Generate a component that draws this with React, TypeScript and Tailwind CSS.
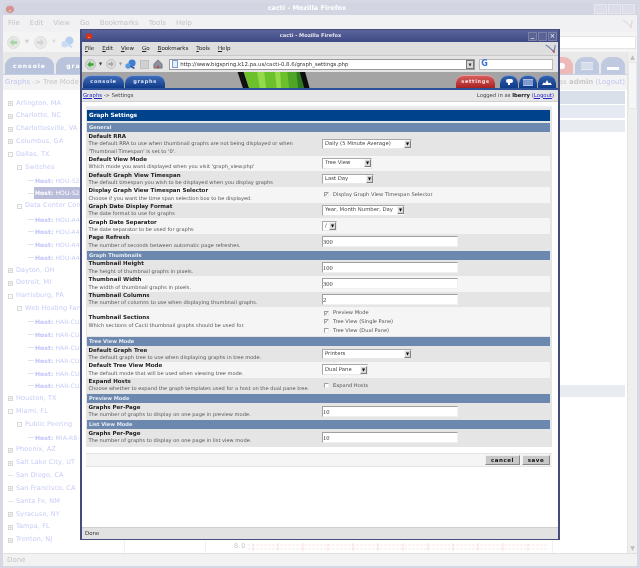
const font = "font-['DejaVu_Sans',sans-serif]"

const tree: [number, string, string?][] = [
  [0, 'Arlington, MA', '+'],
  [0, 'Charlotte, NC', '+'],
  [0, 'Charlottesville, VA', '+'],
  [0, 'Columbus, GA', '+'],
  [0, 'Dallas, TX', '-'],
  [1, 'Switches', '-'],
  [2, 'HOU-S2-01'],
  [3, 'HOU-S2-02'],
  [1, 'Data Center Core', '-'],
  [2, 'HOU-A4-01'],
  [2, 'HOU-A4-02'],
  [2, 'HOU-A4-03'],
  [2, 'HOU-A4-04'],
  [0, 'Dayton, OH', '+'],
  [0, 'Detroit, MI', '+'],
  [0, 'Harrisburg, PA', '-'],
  [1, 'Web Hosting Farm', '-'],
  [2, 'HAR-CU-01'],
  [2, 'HAR-CU-02'],
  [2, 'HAR-CU-03'],
  [2, 'HAR-CU-04'],
  [2, 'HAR-CU-05'],
  [2, 'HAR-CU-06'],
  [0, 'Houston, TX', '+'],
  [0, 'Miami, FL', '-'],
  [1, 'Public Peering', '-'],
  [2, 'MIA-R8-01'],
  [0, 'Phoenix, AZ', '+'],
  [0, 'Salt Lake City, UT', '+'],
  [0, 'San Diego, CA'],
  [0, 'San Francisco, CA', '+'],
  [0, 'Santa Fe, NM'],
  [0, 'Syracuse, NY', '+'],
  [0, 'Tampa, FL', '+'],
  [0, 'Trenton, NJ', '+'],
]

function Firefoxish({ className }: { className: string }) {
  return (
    <svg viewBox="0 0 12 12" className={className}>
      <path d="M1 7c0-3 2-5 3-5l1 1 1-2 1 2 1-1c2 1 3 3 3 5 0 2-2 4-5 4S1 9 1 7z" fill="#d8301e" />
      <path d="M4 8c1-1 3-1 4 0-1 1.500-3 1.500-4 0z" fill="#f7b32b" />
    </svg>
  )
}

function Tick({ faded }: { faded?: boolean }) {
  return (
    <svg viewBox="0 0 16 12" className="w-[13px] h-[11px]">
      <path d="M2 2c4 1 8 6 10 8 1-2 1-5 2-8" fill="none" stroke={faded ? '#d8d8e8' : '#6f7ca8'} strokeWidth="1.400" />
      <path d="M11 9l2 2" stroke={faded ? '#f4c8c8' : '#c83030'} strokeWidth="1.500" />
    </svg>
  )
}

function Arrow({ color, dir, size }: { color: string; dir: 'l' | 'r'; size: string }) {
  return (
    <svg viewBox="0 0 14 14" className={size}>
      <circle cx="7" cy="7" r="6.500" fill={color === 'green' ? '#d0d8d0' : '#dcdcdc'} stroke="#a8a8a8" strokeWidth="0.700" />
      <path
        d={dir === 'l' ? 'M3 7l4-4v2.500h4v3H7V11z' : 'M11 7L7 3v2.500H3v3h4V11z'}
        fill={color === 'green' ? '#3fa535' : '#a8a8a8'}
      />
    </svg>
  )
}

function Globe({ size, faded }: { size: string; faded?: boolean }) {
  return (
    <svg viewBox="0 0 14 14" className={size}>
      <circle cx="9" cy="5" r="4.500" fill={faded ? '#b8d0f0' : '#3f7fd0'} />
      <circle cx="4" cy="9" r="3.500" fill={faded ? '#c8dcf4' : '#5b9ae0'} />
      <path d="M7 9l5 3" stroke={faded ? '#c8dcf4' : '#24508c'} strokeWidth="2" />
    </svg>
  )
}

function BackgroundWindow() {
  return (
    <div className="w-[640px] h-[568px] flex flex-col bg-white border-x-[3px] border-t-[3px] border-b-2 border-[#d6d8e4]">
      <div className="h-[12px] shrink-0 bg-[#d3d5e3] flex items-center relative">
        <Firefoxish className="w-[10px] h-[10px] ml-[2px] opacity-40" />
        <span className="flex-1 text-center text-[6.500px] font-bold text-white pl-[5px]">cacti - Mozilla Firefox</span>
        <span className="flex gap-[1px] mr-[2px]">
          <span className="w-[13px] h-[10px] bg-[#dcdde8] border border-[#e6e7ef]" />
          <span className="w-[13px] h-[10px] bg-[#dcdde8] border border-[#e6e7ef]" />
          <span className="w-[13px] h-[10px] bg-[#dcdde8] border border-[#e6e7ef]" />
        </span>
      </div>
      <div className="h-[17px] shrink-0 bg-[#f1f1f3] flex items-center gap-[10px] pl-[5px] text-[7px] text-[#c4c4c4] relative">
        <span>File</span>
        <span>Edit</span>
        <span>View</span>
        <span>Go</span>
        <span>Bookmarks</span>
        <span>Tools</span>
        <span>Help</span>
        <span className="ml-auto mr-[3px]">
          <Tick faded />
        </span>
      </div>
      <div className="h-[20px] shrink-0 bg-[#f4f4f4] flex items-center pl-[4px] gap-[5px] pr-[1px]">
        <Arrow color="green" dir="l" size="w-[13px] h-[13px] opacity-40" />
        <span className="w-[4px] text-[5px] text-[#ccc]">▼</span>
        <Arrow color="gray" dir="r" size="w-[13px] h-[13px] opacity-40" />
        <span className="w-[4px] text-[5px] text-[#ddd]">▼</span>
        <Globe size="w-[13px] h-[13px]" faded />
        <span className="ml-auto w-[100px] h-[13px] bg-white border border-[#e4e4e4]" />
      </div>
      <div className="flex-1 flex min-h-0">
        <div className="flex-1 flex flex-col min-w-0">
          <div className="h-[23px] shrink-0 bg-[#e9e9e9] border-b border-[#c6cfe4] flex items-end pl-[2px]">
            <span className="w-[49px] h-[17px] rounded-t-[9px] bg-[#b9c4dc] text-white text-[6px] font-bold tracking-[1px] flex items-center justify-center">
              console
            </span>
            <span className="ml-[2px] w-[50px] h-[17px] rounded-t-[9px] bg-[#b9c4dc] text-white text-[6px] font-bold tracking-[1px] flex items-center justify-center">
              graphs
            </span>
            <span className="ml-auto w-[24px] h-[17px] rounded-t-[9px] bg-[#eeb9b9] flex items-center justify-center">
              <span className="w-[8px] h-[6px] rounded-full bg-white" />
            </span>
            <span className="ml-[2px] w-[24px] h-[17px] rounded-t-[9px] bg-[#bfc9e0] flex items-center justify-center">
              <span className="w-[12px] h-[8px] bg-[#d5dcea] border-y border-[#e6eaf2]" />
            </span>
            <span className="ml-[2px] mr-[2px] w-[24px] h-[17px] rounded-t-[9px] bg-[#bfc9e0] flex items-end justify-center pb-[4px]">
              <span className="w-[12px] h-[3px] bg-white" />
            </span>
          </div>
          <div className="h-[15px] shrink-0 bg-[#f3f3f3] flex items-center justify-between px-[2px] text-[7px] text-[#c8c8c8]">
            <span>
              <span className="text-[#c4c4f4]">Graphs</span> -&gt; Tree Mode
            </span>
            <span>
              Logged in as <b>admin</b> <span className="text-[#c4c4f4]">(Logout)</span>
            </span>
          </div>
          <div className="flex-1 flex min-h-0">
            <div className="w-[122px] shrink-0 border-r border-[#f0f0f0] pt-[7px] overflow-hidden">
              {tree.map(([level, name, toggle], i) => (
                <div key={i} className="h-[12.850px] flex items-center text-[6.500px] tracking-[0.100px] text-[#c8ccf8] whitespace-nowrap">
                  {level >= 2 ? (
                    <>
                      <span className="ml-[25px] w-[6px] border-t border-[#e4e4e4]" />
                      <span className={level === 3 ? 'text-[6px] bg-[#b8bcd8] text-white px-[1px] h-[12px] leading-[12px]' : 'text-[6px] px-[1px]'}>
                        <b className={level === 3 ? 'text-white' : 'text-[#c0c4f8]'}>Host:</b> {name}
                      </span>
                    </>
                  ) : (
                    <>
                      <span className={level === 1 ? 'w-[5px] h-[5px] ml-[14px] mr-[3px]' : 'w-[5px] h-[5px] ml-[5px] mr-[3px]'}>
                        {toggle ? (
                          <span className="w-[5px] h-[5px] border border-[#d8d8d8] text-[#c8c8c8] text-[5px] leading-[3px] flex items-center justify-center">
                            {toggle}
                          </span>
                        ) : (
                          <span className="block w-[5px] mt-[2px] border-t border-[#e4e4e4]" />
                        )}
                      </span>
                      <span>{name}</span>
                    </>
                  )}
                </div>
              ))}
            </div>
            <div className="flex-1 flex flex-col pr-[2px] pt-[1px] relative">
              <div className="h-[13px] bg-[#d9e0e9]" />
              <div className="h-[13px] mt-[1px] bg-[#e5e9f1]" />
              <div className="h-[12px] mt-[2px] bg-[#e8ecf1]" />
              <div className="h-[12px] mt-[253px] bg-[#e8ecf1]" />
              <div className="flex-1" />
              <div className="h-[12px] flex items-center border-x border-[#f0f0f0] ml-[80px] mr-[72px] pl-[28px] text-[6.500px] tracking-[0.500px] text-[#c4c4c4]">
                <span>8.0</span>
                <svg viewBox="0 0 300 10" className="ml-[2px] w-[300px] h-[10px]">
                  <path d="M0 3h300M0 7h300" stroke="#f6dede" strokeWidth="0.700" strokeDasharray="3 1" />
                  <path d="M5 1v8M30 1v8M55 1v8M80 1v8M105 1v8M130 1v8M155 1v8M180 1v8M205 1v8M230 1v8M255 1v8M280 1v8" stroke="#f4cccc" strokeWidth="0.600" />
                </svg>
              </div>
            </div>
          </div>
        </div>
        <div className="w-[10px] shrink-0 bg-[#efefef] border-l border-[#e4e4e4] flex flex-col">
          <span className="h-[10px] text-[6px] text-center text-[#bcbcbc]">▲</span>
          <span className="h-[47px] bg-[#f6f6f6] border border-[#e8e8e8]" />
          <span className="mt-auto h-[10px] text-[6px] text-center text-[#bcbcbc]">▼</span>
        </div>
      </div>
      <div className="h-[13px] shrink-0 bg-[#f2f2f2] border-t border-[#e0e0e0] pl-[4px] text-[7px] leading-[13px] text-[#c8c8c8]">Done</div>
    </div>
  )
}

function Tab({ label, wide }: { label: string; wide: string }) {
  return (
    <span className={`${wide} h-[13px] rounded-t-[8px] bg-gradient-to-b from-[#3f6cb8] to-[#0f3a88] text-[#dfe6f4] text-[5px] font-bold tracking-[0.700px] flex items-center justify-center border-t border-[#8aa4d4]`}>
      {label}
    </span>
  )
}

function IconTab({ wide, children }: { wide: string; children: React.ReactNode }) {
  return (
    <span className={`${wide} h-[13px] rounded-t-[8px] bg-gradient-to-b from-[#3160ac] to-[#0f3a88] flex items-center justify-center border-t border-[#7e9ace]`}>
      {children}
    </span>
  )
}

function Select({ text, wide }: { text: string; wide: string }) {
  return (
    <div className={`${wide} h-[10.500px] bg-white border border-[#a8a8a8] border-r-[#e8e8e8] border-b-[#e8e8e8] flex items-center justify-between pl-[2px] text-[5.300px] text-[#444] whitespace-nowrap`}>
      <span>{text}</span>
      <span className="w-[7px] h-[8px] bg-[#d8d8d8] border border-[#f4f4f4] border-r-[#808080] border-b-[#808080] text-[4px] leading-[6px] text-center text-black">▼</span>
    </div>
  )
}

function TextBox({ value }: { value: string }) {
  return (
    <div className="w-[136px] h-[11px] bg-white border border-[#a0a0a0] border-r-[#f0f0f0] border-b-[#f0f0f0] text-[6.500px] leading-[9px] text-[#444] font-['Liberation_Serif',serif]">
      {value}
    </div>
  )
}

function Check({ label, on }: { label: string; on?: boolean }) {
  return (
    <div className="flex items-center h-[8.700px] text-[5.150px] text-[#555]">
      <span className="w-[5px] h-[5px] ml-[2px] mr-[4px] bg-white border border-[#a0a0a0] border-r-[#eee] border-b-[#eee] text-[5px] leading-[3px] text-[#444] flex items-center justify-center">
        {on ? '✓' : ''}
      </span>
      {label}
    </div>
  )
}

function Row({ title, desc, alt, height, children }: { title: string; desc: React.ReactNode; alt?: boolean; height?: string; children: React.ReactNode }) {
  return (
    <div className={`${height ?? 'h-[15.700px]'} ${alt ? 'bg-[#f5f5f5]' : 'bg-[#e5e5e5]'} flex`}>
      <div className="w-[235px] shrink-0 pl-[1.500px] flex flex-col justify-center">
        <div className="text-[5.500px] leading-[7.500px] font-bold text-[#1c1c1c] whitespace-nowrap">{title}</div>
        <div className="text-[5.100px] leading-[7.500px] text-[#555] whitespace-nowrap">{desc}</div>
      </div>
      <div className="flex-1 flex flex-col justify-center">{children}</div>
    </div>
  )
}

function Section({ label, mt }: { label: string; mt: string }) {
  return (
    <div className={`${mt} h-[9.500px] bg-[#6d88ae] text-[#e8edf5] text-[5.100px] leading-[9.500px] font-bold pl-[2px]`}>{label}</div>
  )
}

function FrontWindow() {
  return (
    <div className="absolute left-[80px] top-[29px] w-[480px] h-[511px] flex flex-col bg-white border-x-2 border-y border-[#454e7a]">
      <div className="h-[12px] shrink-0 bg-gradient-to-b from-[#5b649a] to-[#3f4a86] flex items-center">
        <Firefoxish className="w-[8px] h-[8px] ml-[3px]" />
        <span className="flex-1 text-center text-[5.100px] font-bold text-[#e4e6f2]">cacti - Mozilla Firefox</span>
        <span className="flex gap-[1px] mr-[1px]">
          <span className="w-[9px] h-[9px] bg-[#5a6494] border border-[#7a82aa] text-[7px] leading-[5px] text-center text-white">_</span>
          <span className="w-[9px] h-[9px] bg-[#5a6494] border border-[#7a82aa]" />
          <span className="w-[9px] h-[9px] bg-[#5a6494] border border-[#7a82aa] text-[7px] leading-[7px] text-center text-white">×</span>
        </span>
      </div>
      <div className="h-[13px] shrink-0 bg-[#dedede] flex items-center pl-[3px] gap-[8px] text-[5.500px] text-[#222]">
        <span><u>F</u>ile</span>
        <span><u>E</u>dit</span>
        <span><u>V</u>iew</span>
        <span><u>G</u>o</span>
        <span><u>B</u>ookmarks</span>
        <span><u>T</u>ools</span>
        <span><u>H</u>elp</span>
        <span className="ml-auto mr-[1px]">
          <Tick />
        </span>
      </div>
      <div className="h-[17px] shrink-0 bg-[#e4e4e4] border-t border-[#c8c8c8] flex items-center pl-[3px] pr-[2px]">
        <Arrow color="green" dir="l" size="w-[11px] h-[11px]" />
        <span className="text-[4px] ml-[3px] mr-[4px] text-[#333]">▼</span>
        <Arrow color="gray" dir="r" size="w-[10px] h-[10px]" />
        <span className="text-[4px] ml-[3px] mr-[3px] text-[#999]">▼</span>
        <Globe size="w-[11px] h-[11px]" />
        <span className="w-[9px] h-[9px] ml-[4px] mr-[4px] bg-[#d0d0d0] border border-[#c0c0c0]" />
        <svg viewBox="0 0 12 12" className="w-[10px] h-[10px] shrink-0">
          <path d="M1 6l5-5 5 5v5H1z" fill="#8b8fa0" stroke="#555" strokeWidth="0.600" />
          <path d="M5 8h2v3H5z" fill="#c0462a" />
        </svg>
        <div className="ml-[6px] w-[306px] h-[11px] shrink-0 bg-white border border-[#9a9a9a] flex items-center text-[5.400px] text-[#333] pl-[2px] whitespace-nowrap">
          <span className="w-[6px] h-[8px] mr-[2px] bg-[#e8eefc] border border-[#7a9ad4]" />
          <span className="flex-1">http://www.bigspring.k12.pa.us/cacti-0.8.6/graph_settings.php</span>
          <span className="w-[8px] h-[9px] bg-[#d8d8d8] border border-[#777] text-[4px] leading-[7px] text-center">▼</span>
        </div>
        <div className="ml-[4px] w-[74px] h-[11px] shrink-0 bg-white border border-[#bbb] flex items-center pl-[1px]">
          <span className="text-[8px] leading-[8px] font-bold text-[#3a6fd8]">G</span>
        </div>
      </div>
      <div className="h-[18px] shrink-0 bg-[#a4a4a4] border-b-2 border-[#2e4f9a] flex items-end pl-[1px] pr-[2px] relative overflow-hidden">
        <Tab label="console" wide="w-[41px]" />
        <span className="ml-[1px]">
          <Tab label="graphs" wide="w-[40px]" />
        </span>
        <svg viewBox="0 0 82 18" className="absolute left-[151px] top-0 w-[82px] h-[16px]">
          <path d="M0 0h7l6 18H6z" fill="#111" />
          <path d="M7 0h67l3 18H13z" fill="#6cc02c" />
          <path d="M22 0h8l2 18h-7zM42 0h6l1 18h-5z" fill="#93da4c" />
          <path d="M56 0h10l2 18H58z" fill="#4ea526" />
          <path d="M66 0h8l3 18H68z" fill="#2f7a20" />
          <path d="M70 0h4l5 18h-4zM74 0h2l5 18h-2z" fill="#0d0d0d" />
        </svg>
        <span className="ml-auto w-[39px] h-[13px] rounded-t-[8px] bg-gradient-to-b from-[#d65c5c] to-[#a82020] text-[#f8e4e4] text-[5px] font-bold tracking-[0.700px] flex items-center justify-center border-t border-[#eba0a0]">
          settings
        </span>
        <span className="ml-[5px]">
          <IconTab wide="w-[18px]">
            <span className="flex flex-col items-center">
              <span className="w-[7px] h-[4px] rounded-full bg-white" />
              <span className="w-[2px] h-[2px] bg-white" />
            </span>
          </IconTab>
        </span>
        <span className="ml-[1px]">
          <IconTab wide="w-[18px]">
            <span className="w-[10px] h-[7px] bg-[#7f9ad0] border-y border-[#adc0e4]" />
          </IconTab>
        </span>
        <span className="ml-[1px]">
          <IconTab wide="w-[18px]">
            <svg viewBox="0 0 12 6" className="w-[10px] h-[5px]">
              <path d="M0 6l2-3 2 1 2-4 2 4 2-1 2 3z" fill="#fff" />
            </svg>
          </IconTab>
        </span>
      </div>
      <div className="h-[12px] shrink-0 bg-[#e6e6e6] border-b border-[#d0d0d0] flex items-center justify-between px-[1px] text-[5.300px] text-[#444]">
        <span>
          <span className="text-[#2222cc] underline">Graphs</span> -&gt; Settings
        </span>
        <span className="mr-[3px]">
          Logged in as <b className="text-[#111]">lberry</b> <span className="text-[#2222cc]">(<u>Logout</u>)</span>
        </span>
      </div>
      <div className={`flex-1 min-h-0 pl-[4px] pr-[6px] pt-[4px] ${font}`}>
        <div className="bg-[#e5e5e5] border-t-2 border-[#ececec] pl-[1px] pr-[2px] pt-[2px] pb-[2px]">
          <div className="h-[11px] bg-[#00438c] text-white text-[5.700px] leading-[11px] font-bold pl-[2px]">Graph Settings</div>
          <Section label="General" mt="mt-[1.500px]" />
          <Row title="Default RRA" height="h-[23.500px]" desc={<>The default RRA to use when thumbnail graphs are not being displayed or when<br />'Thumbnail Timespan' is set to '0'.</>}>
            <Select text="Daily (5 Minute Average)" wide="w-[90px]" />
          </Row>
          <Row alt title="Default View Mode" desc="Which mode you want displayed when you visit 'graph_view.php'">
            <Select text="Tree View" wide="w-[50px]" />
          </Row>
          <Row title="Default Graph View Timespan" desc="The default timespan you wish to be displayed when you display graphs">
            <Select text="Last Day" wide="w-[52px]" />
          </Row>
          <Row alt title="Display Graph View Timespan Selector" desc="Choose if you want the time span selection box to be displayed.">
            <Check label="Display Graph View Timespan Selector" on />
          </Row>
          <Row title="Graph Date Display Format" desc="The date format to use for graphs">
            <Select text="Year, Month Number, Day" wide="w-[83px]" />
          </Row>
          <Row alt title="Graph Date Separator" desc="The date separator to be used for graphs">
            <Select text="/" wide="w-[15px]" />
          </Row>
          <Row title="Page Refresh" desc="The number of seconds between automatic page refreshes.">
            <TextBox value="300" />
          </Row>
          <Section label="Graph Thumbnails" mt="mt-[1px]" />
          <Row title="Thumbnail Height" desc="The height of thumbnail graphs in pixels.">
            <TextBox value="100" />
          </Row>
          <Row alt title="Thumbnail Width" desc="The width of thumbnail graphs in pixels.">
            <TextBox value="300" />
          </Row>
          <Row title="Thumbnail Columns" desc="The number of columns to use when displaying thumbnail graphs.">
            <TextBox value="2" />
          </Row>
          <Row alt title="Thumbnail Sections" height="h-[29px]" desc="Which sections of Cacti thumbnail graphs should be used for.">
            <Check label="Preview Mode" on />
            <Check label="Tree View (Single Pane)" on />
            <Check label="Tree View (Dual Pane)" />
          </Row>
          <Section label="Tree View Mode" mt="mt-[0.500px]" />
          <Row title="Default Graph Tree" desc="The default graph tree to use when displaying graphs in tree mode.">
            <Select text="Printers" wide="w-[90px]" />
          </Row>
          <Row alt title="Default Tree View Mode" desc="The default mode that will be used when viewing tree mode.">
            <Select text="Dual Pane" wide="w-[46px]" />
          </Row>
          <Row title="Expand Hosts" desc="Choose whether to expand the graph templates used for a host on the dual pane tree.">
            <Check label="Expand Hosts" />
          </Row>
          <Section label="Preview Mode" mt="mt-[0.500px]" />
          <Row title="Graphs Per-Page" desc="The number of graphs to display on one page in preview mode.">
            <TextBox value="10" />
          </Row>
          <Section label="List View Mode" mt="mt-[1px]" />
          <Row title="Graphs Per-Page" desc="The number of graphs to display on one page in list view mode.">
            <TextBox value="10" />
          </Row>
        </div>
        <div className="mt-[6px] h-[14px] bg-[#f5f5f5] border-y border-[#e4e4e4] flex items-center justify-end gap-[2px] pr-[2px]">
          <button className="w-[35px] h-[10px] bg-[#c8c8c8] border border-[#888] border-t-[#eee] border-l-[#eee] text-[5.500px] leading-[7px] font-bold tracking-[0.500px] text-[#111]">cancel</button>
          <button className="w-[28px] h-[10px] bg-[#c8c8c8] border border-[#888] border-t-[#eee] border-l-[#eee] text-[5.500px] leading-[7px] font-bold tracking-[0.500px] text-[#111]">save</button>
        </div>
      </div>
      <div className="h-[12px] shrink-0 bg-[#e2e2e2] border-t border-[#cfcfcf] pl-[3px] text-[5.500px] leading-[11px] text-[#333]">Done</div>
    </div>
  )
}

export default function App() {
  return (
    <div className={`relative w-[640px] h-[568px] overflow-hidden blur-[0.350px] ${font}`}>
      <BackgroundWindow />
      <FrontWindow />
    </div>
  )
}
